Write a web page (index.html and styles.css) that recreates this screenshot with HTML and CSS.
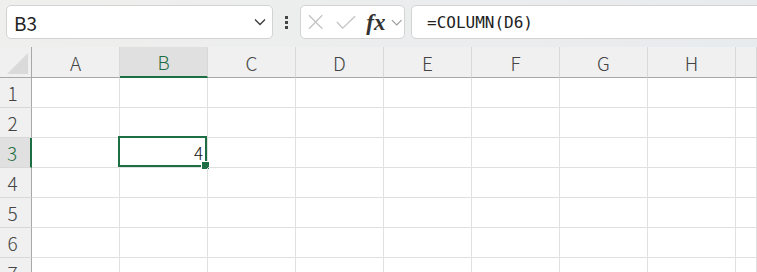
FILE: index.html
```html
<!DOCTYPE html>
<html lang="ja">
<head>
  <meta charset="UTF-8">
  <title>Sheet</title>
  <link rel="stylesheet" href="styles.css">
</head>
<body>
  <div class="toolbar">
    <div class="namebox">
      <span class="name">B3</span>
      <svg class="chev" width="12" height="8" viewBox="0 0 12 8"><polyline points="1,1.5 6,6.5 11,1.5" fill="none" stroke="#3a3a3a" stroke-width="1.3"/></svg>
    </div>
    <div class="dots"><i></i><i></i><i></i></div>
    <div class="fxbox">
      <svg width="16" height="16" viewBox="0 0 16 16"><path d="M1 1 L15 15 M15 1 L1 15" stroke="#c2c2c2" stroke-width="1.3" fill="none"/></svg>
      <svg width="21" height="15" viewBox="0 0 21 15"><polyline points="1,7 7,13.5 20,1" stroke="#c2c2c2" stroke-width="1.3" fill="none"/></svg>
      <span class="fx">fx</span>
      <svg width="12" height="7" viewBox="0 0 12 7"><polyline points="1,1 6,6 11,1" fill="none" stroke="#9a9a9a" stroke-width="1.2"/></svg>
    </div>
    <div class="formula">=COLUMN(D6)</div>
  </div>

  <div class="sheet">
    <div class="corner"><svg width="31" height="30" viewBox="0 0 31 30"><polygon points="28,6 28,27 7,27" fill="#dadada"/></svg></div>
    <div class="colhead">A</div>
    <div class="colhead active">B</div>
    <div class="colhead">C</div>
    <div class="colhead">D</div>
    <div class="colhead">E</div>
    <div class="colhead">F</div>
    <div class="colhead">G</div>
    <div class="colhead">H</div>
    <div class="colhead"></div>

    <div class="rowhead">1</div>
    <div class="cell"></div><div class="cell"></div><div class="cell"></div><div class="cell"></div><div class="cell"></div><div class="cell"></div><div class="cell"></div><div class="cell"></div><div class="cell"></div>

    <div class="rowhead">2</div>
    <div class="cell"></div><div class="cell"></div><div class="cell"></div><div class="cell"></div><div class="cell"></div><div class="cell"></div><div class="cell"></div><div class="cell"></div><div class="cell"></div>

    <div class="rowhead active">3</div>
    <div class="cell"></div><div class="cell selected">4</div><div class="cell"></div><div class="cell"></div><div class="cell"></div><div class="cell"></div><div class="cell"></div><div class="cell"></div><div class="cell"></div>

    <div class="rowhead">4</div>
    <div class="cell"></div><div class="cell"></div><div class="cell"></div><div class="cell"></div><div class="cell"></div><div class="cell"></div><div class="cell"></div><div class="cell"></div><div class="cell"></div>

    <div class="rowhead">5</div>
    <div class="cell"></div><div class="cell"></div><div class="cell"></div><div class="cell"></div><div class="cell"></div><div class="cell"></div><div class="cell"></div><div class="cell"></div><div class="cell"></div>

    <div class="rowhead">6</div>
    <div class="cell"></div><div class="cell"></div><div class="cell"></div><div class="cell"></div><div class="cell"></div><div class="cell"></div><div class="cell"></div><div class="cell"></div><div class="cell"></div>

    <div class="rowhead partial">7</div>
    <div class="cell"></div><div class="cell"></div><div class="cell"></div><div class="cell"></div><div class="cell"></div><div class="cell"></div><div class="cell"></div><div class="cell"></div><div class="cell"></div>
  </div>
</body>
</html>
```

FILE: styles.css
```css
*{
  box-sizing: border-box;
}

body{
  margin: 0;
  width: 757px;
  height: 272px;
  overflow: hidden;
  background: #fff;
  font-family: "Noto Sans CJK JP", "Noto Sans", sans-serif;
  color: #444;
}

.toolbar{
  height: 47px;
  display: flex;
  align-items: flex-start;
  padding: 5px 0 0 6px;
  background: linear-gradient(90deg, #efefed, #e8ebee);
}

.namebox{
  width: 267px;
  height: 34px;
  display: flex;
  align-items: center;
  justify-content: space-between;
  padding: 0 6px 0 7px;
  background: #fff;
  border: 1px solid #d3d3d3;
  border-radius: 5px;
}

.name{
  font-size: 19px;
  color: #222;
}

.dots{
  width: 27px;
  height: 34px;
  display: flex;
  flex-direction: column;
  align-items: center;
  justify-content: center;
  gap: 2px;
}

.dots i{
  width: 3px;
  height: 3px;
  background: #444;
}

.fxbox{
  width: 105px;
  height: 34px;
  display: flex;
  align-items: center;
  padding: 0 2px 0 7px;
  background: #fff;
  border: 1px solid #d3d3d3;
  border-radius: 5px;
}

.fxbox svg:nth-child(2){
  margin-left: 13px;
}

.fx{
  margin-left: 10px;
  margin-right: 5px;
  font-family: "Liberation Serif", serif;
  font-style: italic;
  font-weight: bold;
  font-size: 23px;
  color: #333;
  line-height: 1;
}

.formula{
  flex: 1;
  height: 34px;
  margin-left: 6px;
  margin-right: -10px;
  padding: 0 0 0 15px;
  display: flex;
  align-items: center;
  background: #fff;
  border: 1px solid #d3d3d3;
  border-radius: 5px;
  font-family: "DejaVu Sans Mono", monospace;
  font-size: 16px;
  color: #222;
}

.sheet{
  display: grid;
  grid-template-columns: 32px repeat(8, 88px) 21px;
  grid-template-rows: 31px repeat(6, 30px) 15px;
  overflow: hidden;
}

.corner{
  background: #f0f0f0;
  border-right: 1px solid #a8a8a8;
  border-bottom: 1px solid #a8a8a8;
}

.corner svg{
  display: block;
}

.colhead{
  display: flex;
  align-items: center;
  justify-content: center;
  background: #f0f0f0;
  border-right: 1px solid #d8d8d8;
  border-bottom: 1px solid #a8a8a8;
  font-size: 19px;
  font-weight: 300;
  color: #444;
}

.colhead.active{
  background: #e0e0e0;
  color: #1e6e43;
  border-bottom: 2px solid #1e6e43;
}

.rowhead{
  display: flex;
  align-items: center;
  justify-content: center;
  padding-right: 6px;
  background: #f0f0f0;
  border-right: 1px solid #a8a8a8;
  border-bottom: 1px solid #d8d8d8;
  font-size: 19px;
  font-weight: 300;
  color: #444;
}

.rowhead.partial{
  align-items: flex-start;
  line-height: 30px;
  border-bottom: none;
}

.rowhead.active{
  background: #e0e0e0;
  color: #1e6e43;
  border-right: 2px solid #1e6e43;
}

.cell{
  position: relative;
  display: flex;
  align-items: center;
  justify-content: flex-end;
  padding-right: 4px;
  border-right: 1px solid #e0e0e0;
  border-bottom: 1px solid #e0e0e0;
  font-size: 17px;
  font-weight: 300;
  color: #111;
}

.selected::before{
  content: "";
  position: absolute;
  top: -2px;
  left: -2px;
  right: 0;
  bottom: 0;
  border: 2px solid #1e6e43;
}

.selected::after{
  content: "";
  position: absolute;
  right: -3px;
  bottom: -3px;
  width: 7px;
  height: 7px;
  background: #1e6e43;
  border: 1px solid #fff;
}
```
